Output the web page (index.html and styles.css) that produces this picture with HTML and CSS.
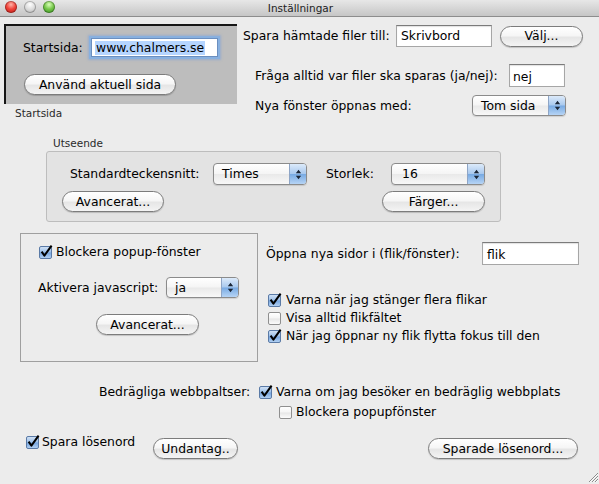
FILE: index.html
```html
<!DOCTYPE html>
<html lang="sv">
<head>
<meta charset="utf-8">
<title>Inställningar</title>
<link rel="stylesheet" href="styles.css">
</head>
<body>
<div class="window">
  <div class="titlebar">
    <div class="lights">
      <span class="light red"></span>
      <span class="light gray"></span>
      <span class="light green"></span>
    </div>
    <div class="title">Inställningar</div>
    <div></div>
  </div>

  <div class="top">
    <div class="home">
      <div class="home-box">
        <div class="home-row">
          <span class="home-label">Startsida:</span>
          <span class="field focus home-field"><span class="sel">www.chalmers.se</span></span>
        </div>
        <span class="btn btn-current">Använd aktuell sida</span>
      </div>
      <div class="caption home-caption">Startsida</div>
    </div>

    <div class="files">
      <div class="row files-row1">
        <span class="l-save">Spara hämtade filer till:</span>
        <span class="field f-save">Skrivbord</span>
        <span class="btn b-choose">Välj...</span>
      </div>
      <div class="row files-row2">
        <span class="l-ask">Fråga alltid var filer ska sparas (ja/nej):</span>
        <span class="field f-ask">nej</span>
      </div>
      <div class="row files-row3">
        <span class="l-new">Nya fönster öppnas med:</span>
        <span class="popup p-new"><span class="pv">Tom sida</span><span class="arrows"><svg width="7" height="11" viewBox="0 0 7 11"><path d="M0.8 4.3 L3.5 0.8 L6.2 4.3 Z M0.8 6.7 L3.5 10.2 L6.2 6.7 Z" fill="#1b2637"/></svg></span></span>
      </div>
    </div>
  </div>

  <div class="appearance">
    <div class="caption app-caption">Utseende</div>
    <div class="group">
      <div class="row g-row1">
        <span class="l-font">Standardteckensnitt:</span>
        <span class="popup p-font"><span class="pv">Times</span><span class="arrows"><svg width="7" height="11" viewBox="0 0 7 11"><path d="M0.8 4.3 L3.5 0.8 L6.2 4.3 Z M0.8 6.7 L3.5 10.2 L6.2 6.7 Z" fill="#1b2637"/></svg></span></span>
        <span class="l-size">Storlek:</span>
        <span class="popup p-size"><span class="pv pv-size">16</span><span class="arrows"><svg width="7" height="11" viewBox="0 0 7 11"><path d="M0.8 4.3 L3.5 0.8 L6.2 4.3 Z M0.8 6.7 L3.5 10.2 L6.2 6.7 Z" fill="#1b2637"/></svg></span></span>
      </div>
      <div class="g-row2">
        <span class="btn b-adv">Avancerat...</span>
        <span class="btn b-colors">Färger...</span>
      </div>
    </div>
  </div>

  <div class="mid">
    <div class="js-box">
      <div class="check-row">
        <span class="cb on first-cb"><svg class="tick" width="14" height="14" viewBox="0 0 14 14"><path d="M2.6 6.6 L5.4 10.6 L12.6 0.6" stroke="#000" stroke-width="2" fill="none" stroke-linejoin="round"/></svg></span>
        <span class="cb-text">Blockera popup-fönster</span>
      </div>
      <div class="row js-row">
        <span class="l-js">Aktivera javascript:</span>
        <span class="popup p-js"><span class="pv">ja</span><span class="arrows"><svg width="7" height="11" viewBox="0 0 7 11"><path d="M0.8 4.3 L3.5 0.8 L6.2 4.3 Z M0.8 6.7 L3.5 10.2 L6.2 6.7 Z" fill="#1b2637"/></svg></span></span>
      </div>
      <span class="btn js-adv">Avancerat...</span>
    </div>

    <div class="tabs">
      <div class="row tabs-row">
        <span class="l-tabs">Öppna nya sidor i (flik/fönster):</span>
        <span class="field f-tabs">flik</span>
      </div>
      <div class="tab-checks">
        <div class="check-row tab-row">
          <span class="cb on"><svg class="tick" width="14" height="14" viewBox="0 0 14 14"><path d="M2.6 6.6 L5.4 10.6 L12.6 0.6" stroke="#000" stroke-width="2" fill="none" stroke-linejoin="round"/></svg></span>
          <span class="cb-text t5">Varna när jag stänger flera flikar</span>
        </div>
        <div class="check-row tab-row">
          <span class="cb off"></span>
          <span class="cb-text t5">Visa alltid flikfältet</span>
        </div>
        <div class="check-row tab-row">
          <span class="cb on"><svg class="tick" width="14" height="14" viewBox="0 0 14 14"><path d="M2.6 6.6 L5.4 10.6 L12.6 0.6" stroke="#000" stroke-width="2" fill="none" stroke-linejoin="round"/></svg></span>
          <span class="cb-text t5">När jag öppnar ny flik flytta fokus till den</span>
        </div>
      </div>
    </div>
  </div>

  <div class="fraud">
    <div class="check-row fraud-row">
      <span class="l-fraud">Bedrägliga webbpaltser:</span>
      <span class="cb on"><svg class="tick" width="14" height="14" viewBox="0 0 14 14"><path d="M2.6 6.6 L5.4 10.6 L12.6 0.6" stroke="#000" stroke-width="2" fill="none" stroke-linejoin="round"/></svg></span>
      <span class="cb-text">Varna om jag besöker en bedräglig webbplats</span>
    </div>
    <div class="check-row fraud-row fraud-row2">
      <span class="cb off"></span>
      <span class="cb-text">Blockera popupfönster</span>
    </div>
  </div>

  <div class="pw">
    <div class="check-row pw-check">
      <span class="cb on"><svg class="tick" width="14" height="14" viewBox="0 0 14 14"><path d="M2.6 6.6 L5.4 10.6 L12.6 0.6" stroke="#000" stroke-width="2" fill="none" stroke-linejoin="round"/></svg></span>
      <span class="cb-text t3">Spara lösenord</span>
    </div>
    <span class="btn b-except">Undantag..</span>
    <span class="btn b-saved">Sparade lösenord...</span>
  </div>

  <svg class="grip" width="10" height="10" viewBox="0 0 10 10">
    <path d="M1 10 L10 1 M4 10 L10 4 M7 10 L10 7" stroke="#8c8c8c" stroke-width="1"/>
    <path d="M2 10 L10 2 M5 10 L10 5 M8 10 L10 8" stroke="#fafafa" stroke-width="1"/>
  </svg>
</div>
</body>
</html>
```

FILE: styles.css
```css
* { box-sizing: border-box; }
html, body { margin: 0; padding: 0; }
body {
  width: 599px;
  height: 484px;
  overflow: hidden;
  font-family: "DejaVu Sans", "Noto Sans", sans-serif;
  font-size: 12.4px;
  line-height: 14px;
  color: #000;
  background: #ececec;
}
.window {
  position: relative;
  width: 599px;
  height: 484px;
  background: #ececec;
}

/* title bar */
.titlebar {
  height: 17px;
  display: grid;
  grid-template-columns: 1fr auto 1fr;
  align-items: center;
  background: linear-gradient(#e7e7e7, #d3d3d3 60%, #c6c6c6);
  border-bottom: 1px solid #8d8d8d;
}
.lights { display: flex; gap: 7px; padding-left: 5px; margin-top: -2px; }
.light {
  width: 12px; height: 12px; border-radius: 50%;
  box-shadow: inset 0 0 0 1px rgba(0,0,0,0.25);
}
.red { background: radial-gradient(circle at 50% 30%, #ffb3a8 0%, #f0433a 45%, #b8150f 100%); }
.gray { background: radial-gradient(circle at 50% 30%, #ffffff 0%, #dadada 50%, #ababab 100%); }
.green { background: radial-gradient(circle at 50% 30%, #d9ffb8 0%, #76c74a 45%, #2f8a1b 100%); }
.title { font-size: 10.5px; color: #222; padding-left: 2px; }

/* generic controls */
.row { display: flex; align-items: center; }
.field {
  display: flex;
  align-items: center;
  background: #fff;
  border: 1px solid #a6a6a6;
  border-top-color: #7b7b7b;
  box-shadow: inset 0 1px 1px rgba(0,0,0,0.12);
  padding-left: 3px;
}
.focus { box-shadow: 0 0 0 2px #88b0df, 0 0 2px 3px rgba(120,160,220,0.5); border-color: #6b8fc0; }
.sel { background: #b5d5ff; padding: 0 1px; }
.btn {
  display: flex;
  align-items: center;
  justify-content: center;
  height: 21px;
  border: 1px solid #7c7c7c;
  border-radius: 11px;
  background: linear-gradient(#ffffff 0%, #f6f6f6 45%, #e6e6e6 55%, #f4f4f4 100%);
  box-shadow: 0 1px 1px rgba(0,0,0,0.18);
  color: #000;
  white-space: nowrap;
}
.popup {
  display: flex;
  align-items: stretch;
  height: 21px;
  border: 1px solid #8b8b8b;
  border-radius: 4px;
  background: linear-gradient(#ffffff 0%, #f5f5f5 48%, #e9e9e9 52%, #f8f8f8 100%);
  box-shadow: 0 1px 1px rgba(0,0,0,0.12);
  overflow: hidden;
}
.pv { flex: 1; display: flex; align-items: center; padding-left: 8px; }
.arrows {
  width: 17px;
  display: flex;
  align-items: center;
  justify-content: center;
  border-left: 1px solid #8ea5c6;
  background: linear-gradient(#dceafa 0%, #a9c9ee 48%, #78aae3 52%, #b6d4f5 100%);
}
.caption { font-size: 10.5px; line-height: 13px; color: #2a2a2a; }

.cb {
  position: relative;
  flex: none;
  width: 13px;
  height: 13px;
  border: 1px solid #5a7aa6;
  border-radius: 2px;
}
.cb.on { background: linear-gradient(#cfe0f4 0%, #9bbfe9 48%, #75a4de 52%, #b0cff2 100%); }
.cb.off {
  border-color: #8f8f8f;
  background: linear-gradient(#ffffff 0%, #f4f4f4 48%, #e6e6e6 52%, #fbfbfb 100%);
}
.tick { position: absolute; left: -1px; top: -2px; }
.check-row { display: flex; align-items: center; }
.cb-text { margin-left: 4px; white-space: nowrap; }
.t5 { margin-left: 5px; }
.t3 { margin-left: 3px; }

/* top area */
.top { display: flex; align-items: flex-start; margin-top: 7px; }
.home { margin-left: 4px; width: 233px; }
.home-box {
  height: 80px;
  background: #bdbdbd;
  border-top: 2px solid #161616;
  border-left: 2px solid #161616;
  padding: 10px 0 0 17px;
}
.home-row { display: flex; align-items: center; height: 23px; }
.home-label { width: 68px; }
.home-field { width: 127px; height: 19px; }
.btn-current { margin-top: 15px; margin-left: 1px; width: 152px; }
.home-caption { margin-top: 3px; padding-left: 11px; }

.files { margin-left: 6px; }
.files-row1 { margin-top: 1px; height: 22px; }
.l-save { width: 153px; }
.f-save { width: 96px; height: 22px; padding-left: 4px; }
.b-choose { margin-left: 8px; width: 83px; }
.files-row2 { margin-top: 17px; padding-left: 12px; height: 23px; }
.l-ask { width: 254px; }
.f-ask { width: 56px; height: 23px; padding-top: 2px; }
.files-row3 { margin-top: 8px; padding-left: 12px; height: 21px; }
.l-new { width: 217px; }
.p-new { width: 94px; }

/* appearance group */
.appearance { margin: 17px 0 0 46px; width: 455px; }
.app-caption { padding-left: 7px; }
.group {
  margin-top: 1px;
  height: 71px;
  background: #e3e3e3;
  border: 1px solid #bdbdbd;
  border-radius: 3px;
  padding: 11px 0 0 15px;
}
.g-row1 { height: 22px; margin-left: 8px; }
.l-font { width: 143px; }
.p-font { width: 94px; height: 22px; }
.l-size { margin-left: 19px; width: 65px; }
.p-size { width: 94px; height: 22px; }
.pv-size { padding-left: 10px; }
.g-row2 { display: flex; justify-content: space-between; width: 423px; margin-top: 6px; }
.b-adv { width: 102px; }
.b-colors { width: 103px; }

/* middle */
.mid { display: flex; align-items: flex-start; margin-top: 11px; }
.js-box {
  margin-left: 20px;
  width: 238px;
  height: 129px;
  border: 1px solid #9f9f9f;
  padding: 11px 0 0 17px;
}
.first-cb { margin-left: 1px; }
.js-box .check-row { height: 14px; }
.js-box .cb-text { margin-left: 4px; }
.js-row { margin-top: 18px; height: 21px; }
.l-js { width: 128px; }
.p-js { width: 73px; }
.js-adv { margin-top: 16px; margin-left: 58px; width: 103px; }

.tabs { margin-left: 8px; }
.tabs-row { margin-top: 9px; height: 23px; }
.l-tabs { width: 216px; }
.f-tabs { width: 97px; height: 23px; padding-left: 4px; padding-top: 2px; }
.tab-checks { margin-top: 26px; margin-left: 2px; }
.tab-row { height: 18px; }

/* fraud */
.fraud { margin: 21px 0 0 99px; }
.fraud-row { height: 18px; }
.l-fraud { width: 160px; }
.fraud-row2 { margin-top: 2px; padding-left: 180px; }

/* passwords */
.pw { display: flex; align-items: flex-start; margin-top: 14px; }
.pw-check { margin-left: 26px; width: 127px; height: 14px; }
.b-except { margin-top: 3px; width: 85px; }
.b-saved { margin-top: 3px; margin-left: 190px; width: 150px; }

.grip { position: absolute; right: 1px; bottom: 2px; }
```
